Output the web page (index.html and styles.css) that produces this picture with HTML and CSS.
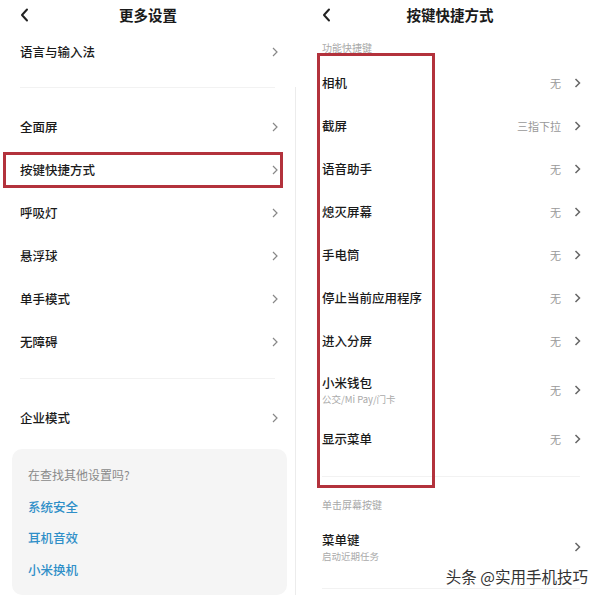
FILE: index.html
```html
<!DOCTYPE html>
<html lang="zh-CN">
<head>
  <meta charset="UTF-8">
  <meta name="viewport" content="width=device-width, initial-scale=1.0">
  <title>更多设置 / 按键快捷方式</title>
  <link rel="stylesheet" href="styles.css">
</head>
<body>
  <div class="panel left">
    <div class="bar">
      <svg class="back" width="9" height="14" viewBox="0 0 9 14"><polyline points="7,1.5 2,7 7,12.5" fill="none" stroke="#222" stroke-width="2" stroke-linecap="round" stroke-linejoin="round"/></svg>
      <h1>更多设置</h1>
    </div>
    <div class="row"><span class="name">语言与输入法</span><svg class="chev" width="6" height="10" viewBox="0 0 6 10"><polyline points="1,1 5,5 1,9" fill="none" stroke="#888" stroke-width="1.2"/></svg></div>

    <div class="rest">
      <div class="divider"></div>
      <div class="row"><span class="name">全面屏</span><svg class="chev" width="6" height="10" viewBox="0 0 6 10"><polyline points="1,1 5,5 1,9" fill="none" stroke="#888" stroke-width="1.2"/></svg></div>
      <div class="row marked"><span class="name">按键快捷方式</span><svg class="chev" width="6" height="10" viewBox="0 0 6 10"><polyline points="1,1 5,5 1,9" fill="none" stroke="#888" stroke-width="1.2"/></svg></div>
      <div class="row"><span class="name">呼吸灯</span><svg class="chev" width="6" height="10" viewBox="0 0 6 10"><polyline points="1,1 5,5 1,9" fill="none" stroke="#888" stroke-width="1.2"/></svg></div>
      <div class="row"><span class="name">悬浮球</span><svg class="chev" width="6" height="10" viewBox="0 0 6 10"><polyline points="1,1 5,5 1,9" fill="none" stroke="#888" stroke-width="1.2"/></svg></div>
      <div class="row"><span class="name">单手模式</span><svg class="chev" width="6" height="10" viewBox="0 0 6 10"><polyline points="1,1 5,5 1,9" fill="none" stroke="#888" stroke-width="1.2"/></svg></div>
      <div class="row"><span class="name">无障碍</span><svg class="chev" width="6" height="10" viewBox="0 0 6 10"><polyline points="1,1 5,5 1,9" fill="none" stroke="#888" stroke-width="1.2"/></svg></div>
      <div class="divider"></div>
      <div class="row"><span class="name">企业模式</span><svg class="chev" width="6" height="10" viewBox="0 0 6 10"><polyline points="1,1 5,5 1,9" fill="none" stroke="#888" stroke-width="1.2"/></svg></div>

      <div class="card">
        <p class="hint">在查找其他设置吗?</p>
        <p class="link">系统安全</p>
        <p class="link">耳机音效</p>
        <p class="link">小米换机</p>
      </div>
    </div>
  </div>

  <div class="panel right">
    <div class="bar">
      <svg class="back" width="9" height="14" viewBox="0 0 9 14"><polyline points="7,1.5 2,7 7,12.5" fill="none" stroke="#222" stroke-width="2" stroke-linecap="round" stroke-linejoin="round"/></svg>
      <h1>按键快捷方式</h1>
    </div>

    <div class="label">功能快捷键</div>
    <div class="row"><span class="name">相机</span><span class="value">无</span><svg class="chev" width="7" height="10" viewBox="0 0 7 10"><polyline points="1.5,1 5.5,5 1.5,9" fill="none" stroke="#666" stroke-width="1.5"/></svg></div>
    <div class="row"><span class="name">截屏</span><span class="value">三指下拉</span><svg class="chev" width="7" height="10" viewBox="0 0 7 10"><polyline points="1.5,1 5.5,5 1.5,9" fill="none" stroke="#666" stroke-width="1.5"/></svg></div>
    <div class="row"><span class="name">语音助手</span><span class="value">无</span><svg class="chev" width="7" height="10" viewBox="0 0 7 10"><polyline points="1.5,1 5.5,5 1.5,9" fill="none" stroke="#666" stroke-width="1.5"/></svg></div>
    <div class="row"><span class="name">熄灭屏幕</span><span class="value">无</span><svg class="chev" width="7" height="10" viewBox="0 0 7 10"><polyline points="1.5,1 5.5,5 1.5,9" fill="none" stroke="#666" stroke-width="1.5"/></svg></div>
    <div class="row"><span class="name">手电筒</span><span class="value">无</span><svg class="chev" width="7" height="10" viewBox="0 0 7 10"><polyline points="1.5,1 5.5,5 1.5,9" fill="none" stroke="#666" stroke-width="1.5"/></svg></div>
    <div class="row"><span class="name">停止当前应用程序</span><span class="value">无</span><svg class="chev" width="7" height="10" viewBox="0 0 7 10"><polyline points="1.5,1 5.5,5 1.5,9" fill="none" stroke="#666" stroke-width="1.5"/></svg></div>
    <div class="row"><span class="name">进入分屏</span><span class="value">无</span><svg class="chev" width="7" height="10" viewBox="0 0 7 10"><polyline points="1.5,1 5.5,5 1.5,9" fill="none" stroke="#666" stroke-width="1.5"/></svg></div>
    <div class="row tall">
      <div class="text"><span class="name">小米钱包</span><span class="sub">公交/Mi Pay/门卡</span></div>
      <span class="value">无</span><svg class="chev" width="7" height="10" viewBox="0 0 7 10"><polyline points="1.5,1 5.5,5 1.5,9" fill="none" stroke="#666" stroke-width="1.5"/></svg>
    </div>
    <div class="row"><span class="name">显示菜单</span><span class="value">无</span><svg class="chev" width="7" height="10" viewBox="0 0 7 10"><polyline points="1.5,1 5.5,5 1.5,9" fill="none" stroke="#666" stroke-width="1.5"/></svg></div>
    <div class="divider"></div>

    <div class="label second">单击屏幕按键</div>
    <div class="row tall">
      <div class="text"><span class="name">菜单键</span><span class="sub">启动近期任务</span></div>
      <svg class="chev" width="7" height="10" viewBox="0 0 7 10"><polyline points="1.5,1 5.5,5 1.5,9" fill="none" stroke="#666" stroke-width="1.5"/></svg>
    </div>
    <div class="divider last"></div>

    <div class="mark"></div>
  </div>

  <div class="watermark">头条 @实用手机技巧</div>
</body>
</html>
```

FILE: styles.css
```css
body {
  margin: 0;
  width: 600px;
  height: 600px;
  overflow: hidden;
  display: flex;
  background: #fff;
  font-family: "Noto Sans CJK SC", "Noto Sans", sans-serif;
  color: #1a1a1a;
  position: relative;
}

.panel {
  width: 300px;
  position: relative;
}

.bar {
  height: 30px;
  position: relative;
  display: flex;
  align-items: center;
  justify-content: center;
}

.bar h1 {
  margin: 0;
  font-size: 14.5px;
  font-weight: bold;
  line-height: 30px;
}

.back {
  position: absolute;
  left: 20px;
  top: 8px;
}

.left .bar {
  width: 296px;
}

.row {
  height: 43px;
  display: flex;
  align-items: center;
  padding: 0 18px 0 20px;
  position: relative;
}

.left .row {
  width: 258px;
}

.name {
  font-size: 12.5px;
  font-weight: 500;
  flex: 1;
}

.chev {
  flex: none;
}

.rest {
  width: 295px;
  margin-top: 14px;
  border-right: 1px solid #ececec;
}

.divider {
  height: 1px;
  background: #f2f2f2;
  margin: 0 20px 17px;
}

.left .row + .divider {
  margin-top: 15px;
}

.marked::after {
  content: "";
  position: absolute;
  left: 3px;
  right: 13px;
  top: 4px;
  bottom: 3px;
  border: 3px solid #b3323c;
}

.card {
  margin: 10px 8px 0 12px;
  padding: 10px 16px;
  background: #f5f5f5;
  border-radius: 10px;
}

.card p {
  margin: 0;
  line-height: 31.5px;
}

.hint {
  font-size: 12px;
  color: #8a8a8a;
}

.link {
  font-size: 12.5px;
  font-weight: 500;
  color: #2f8fc8;
}

.right .back {
  left: 22px;
}

.right .row {
  padding: 0 19px 0 22px;
}

.label {
  font-size: 10px;
  line-height: 12px;
  color: #a8a8a8;
  padding: 12px 22px 7px;
}

.label.second {
  padding: 22px 22px 8px;
}

.value {
  font-size: 11px;
  color: #999;
  margin-right: 13px;
}

.row.tall {
  height: 55px;
}

.text {
  flex: 1;
  display: flex;
  flex-direction: column;
}

.text .name {
  line-height: 18px;
}

.sub {
  font-size: 9.5px;
  line-height: 14px;
  color: #aaa;
}

.right .divider {
  margin: 16px 20px 0 22px;
}

.right .divider.last {
  margin-top: 14px;
}

.mark {
  position: absolute;
  left: 17px;
  top: 53px;
  width: 112px;
  height: 429px;
  border: 3px solid #b3323c;
}

.watermark {
  position: absolute;
  right: 12px;
  bottom: 13px;
  font-size: 15.5px;
  color: #333;
  text-shadow: 0 0 2px #fff, 0 0 2px #fff;
}
```
